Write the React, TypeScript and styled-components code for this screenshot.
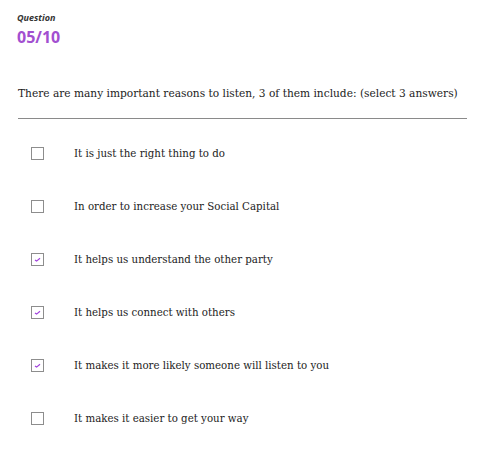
import React, { useState } from "react";
import styled, { createGlobalStyle } from "styled-components";

const Global = createGlobalStyle`
  html, body { margin: 0; padding: 0; background: #ffffff; }
  body { font-family: "DejaVu Serif Condensed", "DejaVu Serif", serif; color: #1c1c1c; }
`;

const Page = styled.div`
  padding: 12px 14px 0 17px;
  box-sizing: border-box;
  width: 481px;
`;

const Label = styled.div`
  font-family: "Open Sans", sans-serif;
  font-weight: 700;
  font-style: italic;
  font-size: 9px;
  line-height: 12px;
  color: #333;
`;

const Counter = styled.div`
  font-family: "Open Sans", sans-serif;
  font-weight: 700;
  font-size: 16px;
  line-height: 20px;
  color: #a24fd0;
  margin-top: 3px;
`;

const Prompt = styled.p`
  margin: 38px 0 0 1px;
  font-size: 11.8px;
  line-height: 16px;
  color: #1c1c1c;
  padding-bottom: 17px;
  border-bottom: 1px solid #8a8a8a;
  white-space: nowrap;
`;

const List = styled.div`
  display: flex;
  flex-direction: column;
  padding: 24px 0 0 14px;
  gap: 33px;
`;

const Row = styled.label`
  display: flex;
  align-items: center;
  height: 20px;
  gap: 30px;
  cursor: pointer;
`;

const Box = styled.span`
  width: 13px;
  height: 13px;
  box-sizing: border-box;
  border: 1px solid #8d8d8d;
  background: #fff;
  display: flex;
  align-items: center;
  justify-content: center;
  flex: none;
`;

const Text = styled.span`
  font-size: 11.4px;
  color: #1c1c1c;
`;

const options = [
  { t: "It is just the right thing to do", c: false },
  { t: "In order to increase your Social Capital", c: false },
  { t: "It helps us understand the other party", c: true },
  { t: "It helps us connect with others", c: true },
  { t: "It makes it more likely someone will listen to you", c: true },
  { t: "It makes it easier to get your way", c: false },
];

export default function App() {
  const [sel, setSel] = useState(options.map((o) => o.c));
  return (
    <>
      <Global />
      <Page>
        <Label>Question</Label>
        <Counter>05/10</Counter>
        <Prompt>
          There are many important reasons to listen, 3 of them include: (select 3 answers)
        </Prompt>
        <List>
          {options.map((o, i) => (
            <Row key={i} onClick={() => setSel(sel.map((s, j) => (j === i ? !s : s)))}>
              <Box>
                {sel[i] && (
                  <svg width="7" height="5" viewBox="0 0 7 5">
                    <path d="M1 3 L2.6 4.1 L6 1.2" stroke="#a040dc" strokeWidth="1.2" fill="none" />
                  </svg>
                )}
              </Box>
              <Text>{o.t}</Text>
            </Row>
          ))}
        </List>
      </Page>
    </>
  );
}
